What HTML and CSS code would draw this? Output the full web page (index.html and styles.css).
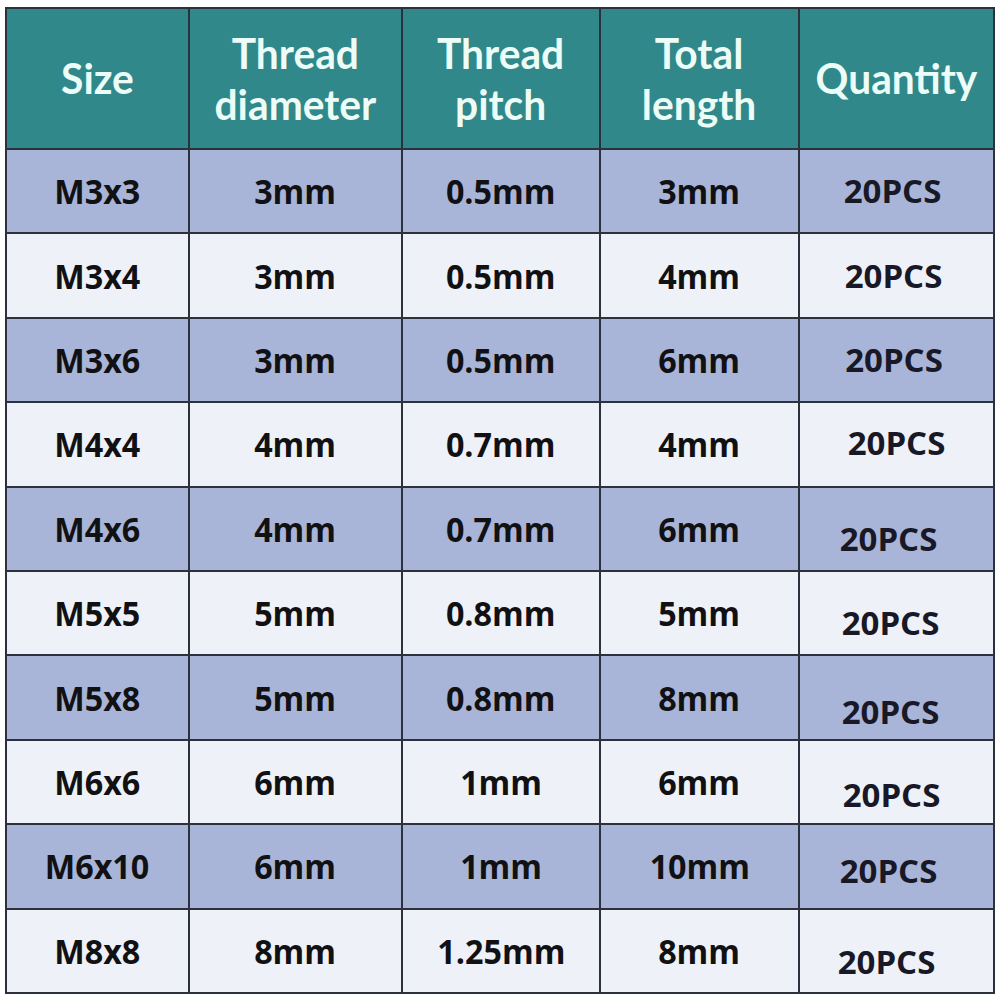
FILE: index.html
```html
<!DOCTYPE html>
<html>
<head>
<meta charset="utf-8">
<link rel="stylesheet" href="styles.css">
</head>
<body>
<div class="table">
  <div class="cell head"><span class="ht">Size</span></div>
  <div class="cell head"><span class="ht">Thread<br>diameter</span></div>
  <div class="cell head"><span class="ht">Thread<br>pitch</span></div>
  <div class="cell head"><span class="ht">Total<br>length</span></div>
  <div class="cell head"><span class="ht">Quantity</span></div>

  <div class="cell alt"><span class="bt">M3x3</span></div>
  <div class="cell alt"><span class="bt">3mm</span></div>
  <div class="cell alt"><span class="bt">0.5mm</span></div>
  <div class="cell alt"><span class="bt">3mm</span></div>
  <div class="cell alt qty q1"><span class="qt">20PCS</span></div>

  <div class="cell"><span class="bt">M3x4</span></div>
  <div class="cell"><span class="bt">3mm</span></div>
  <div class="cell"><span class="bt">0.5mm</span></div>
  <div class="cell"><span class="bt">4mm</span></div>
  <div class="cell qty q2"><span class="qt">20PCS</span></div>

  <div class="cell alt"><span class="bt">M3x6</span></div>
  <div class="cell alt"><span class="bt">3mm</span></div>
  <div class="cell alt"><span class="bt">0.5mm</span></div>
  <div class="cell alt"><span class="bt">6mm</span></div>
  <div class="cell alt qty q3"><span class="qt">20PCS</span></div>

  <div class="cell"><span class="bt">M4x4</span></div>
  <div class="cell"><span class="bt">4mm</span></div>
  <div class="cell"><span class="bt">0.7mm</span></div>
  <div class="cell"><span class="bt">4mm</span></div>
  <div class="cell qty q4"><span class="qt">20PCS</span></div>

  <div class="cell alt"><span class="bt">M4x6</span></div>
  <div class="cell alt"><span class="bt">4mm</span></div>
  <div class="cell alt"><span class="bt">0.7mm</span></div>
  <div class="cell alt"><span class="bt">6mm</span></div>
  <div class="cell alt qty q5"><span class="qt">20PCS</span></div>

  <div class="cell"><span class="bt">M5x5</span></div>
  <div class="cell"><span class="bt">5mm</span></div>
  <div class="cell"><span class="bt">0.8mm</span></div>
  <div class="cell"><span class="bt">5mm</span></div>
  <div class="cell qty q6"><span class="qt">20PCS</span></div>

  <div class="cell alt"><span class="bt">M5x8</span></div>
  <div class="cell alt"><span class="bt">5mm</span></div>
  <div class="cell alt"><span class="bt">0.8mm</span></div>
  <div class="cell alt"><span class="bt">8mm</span></div>
  <div class="cell alt qty q7"><span class="qt">20PCS</span></div>

  <div class="cell"><span class="bt">M6x6</span></div>
  <div class="cell"><span class="bt">6mm</span></div>
  <div class="cell"><span class="bt">1mm</span></div>
  <div class="cell"><span class="bt">6mm</span></div>
  <div class="cell qty q8"><span class="qt">20PCS</span></div>

  <div class="cell alt"><span class="bt">M6x10</span></div>
  <div class="cell alt"><span class="bt">6mm</span></div>
  <div class="cell alt"><span class="bt">1mm</span></div>
  <div class="cell alt"><span class="bt">10mm</span></div>
  <div class="cell alt qty q9"><span class="qt">20PCS</span></div>

  <div class="cell"><span class="bt">M8x8</span></div>
  <div class="cell"><span class="bt">8mm</span></div>
  <div class="cell"><span class="bt">1.25mm</span></div>
  <div class="cell"><span class="bt">8mm</span></div>
  <div class="cell qty q10"><span class="qt">20PCS</span></div>
</div>
</body>
</html>
```

FILE: styles.css
```css
html, body {
  margin: 0;
  padding: 0;
  background: #ffffff;
}
body {
  width: 1001px;
  height: 1001px;
  overflow: hidden;
  font-family: "Open Sans", "Noto Sans", sans-serif;
}
.table {
  margin: 7px 0 0 5px;
  width: 990px;
  box-sizing: border-box;
  display: grid;
  grid-template-columns: 181px 211px 196px 197px 193px;
  grid-template-rows: 139px repeat(10, 82.4px);
  gap: 2px;
  padding: 2px;
  background: #2b323d;
}
.cell {
  display: flex;
  align-items: center;
  justify-content: center;
  background: #eef1f8;
  box-sizing: border-box;
  overflow: hidden;
}
.cell.alt {
  background: #a9b5d8;
}
.cell.head {
  background: #30888b;
}
.ht {
  display: inline-block;
  color: #ecfcf6;
  font-family: "Lato", "Open Sans", sans-serif;
  font-weight: 700;
  font-size: 42px;
  line-height: 51px;
  text-align: center;
  transform: scaleX(0.97);
  white-space: nowrap;
}
.bt {
  display: inline-block;
  color: #111114;
  font-weight: 700;
  font-size: 34px;
  line-height: 40px;
  transform: scaleX(0.95);
  white-space: nowrap;
}
.qt {
  display: inline-block;
  color: #181826;
  font-weight: 700;
  font-size: 33px;
  line-height: 38px;
  white-space: nowrap;
}
.q1 { padding: 0 8px 0 0; }
.q2 { padding: 0 6px 0 0; }
.q3 { padding: 0 5px 0 0; }
.q4 { padding: 0 0 2px 0; }
.q5 { padding: 20px 16px 0 0; }
.q6 { padding: 20px 12px 0 0; }
.q7 { padding: 28px 12px 0 0; }
.q8 { padding: 26px 10px 0 0; }
.q9 { padding: 10px 16px 0 0; }
.q10 { padding: 22px 20px 0 0; }
```
